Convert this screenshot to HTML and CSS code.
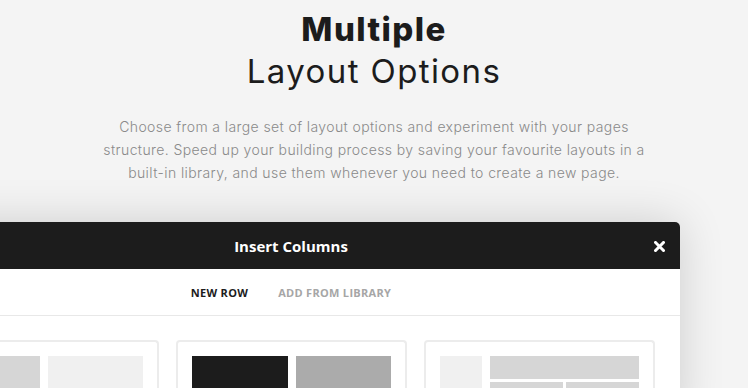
FILE: index.html
```html
<!DOCTYPE html>
<html lang="en">

<head>
  <meta charset="UTF-8" />
  <meta name="viewport" content="width=device-width, initial-scale=1.0" />
  <title>Multiple Layout Options</title>
  <link rel="stylesheet" href="styles.css">
</head>

<body>
  <section class="intro">
    <h1>
      <span class="strong">Multiple</span>
      <span class="light">Layout Options</span>
    </h1>
    <p>Choose from a large set of layout options and experiment with your pages structure. Speed up your building process by saving your favourite layouts in a built-in library, and use them whenever you need to create a new page.</p>
  </section>

  <section class="modal">
    <div class="modal-head">
      <h2>Insert Columns</h2>
      <span class="close">
        <svg width="11" height="11" viewBox="0 0 11 11">
          <path d="M1.5 1.5 L9.5 9.5 M9.5 1.5 L1.5 9.5" stroke="#fff" stroke-width="3" stroke-linecap="square" />
        </svg>
      </span>
    </div>
    <div class="tabs">
      <a class="tab active">NEW ROW</a>
      <a class="tab">ADD FROM LIBRARY</a>
    </div>
    <div class="layouts">
      <div class="layout-card">
        <div class="cols">
          <div class="block mid"></div>
          <div class="block pale"></div>
        </div>
      </div>
      <div class="layout-card">
        <div class="cols">
          <div class="block dark"></div>
          <div class="block grey"></div>
        </div>
      </div>
      <div class="layout-card">
        <div class="cols side">
          <div class="block pale tall"></div>
          <div class="stack">
            <div class="block mid wide"></div>
            <div class="pair">
              <div class="block mid"></div>
              <div class="block mid"></div>
            </div>
          </div>
        </div>
      </div>
    </div>
  </section>
</body>

</html>
```

FILE: styles.css
```css
/* Reset some default styles */
* {
    margin: 0;
    padding: 0;
    box-sizing: border-box;
}

body {
    background-color: #f4f4f4;
    font-family: "Inter", "Liberation Sans", sans-serif;
    overflow: hidden;
}

/* Intro text */
.intro {
    text-align: center;
    padding-top: 8px;
}

.intro h1 {
    font-size: 33px;
    line-height: 42px;
    letter-spacing: 1.4px;
    color: #1c1c1c;
}

.intro h1 span {
    display: block;
}

.intro .strong {
    font-weight: 800;
}

.intro .light {
    font-weight: 400;
}

.intro p {
    width: 548px;
    margin: 23px auto 0;
    font-size: 14px;
    line-height: 23px;
    letter-spacing: 0.4px;
    font-weight: 300;
    color: #8a8a8a;
}

/* Modal */
.modal {
    width: 778px;
    margin: 38px 0 0 -98px;
    background-color: #fff;
    border-radius: 5px 5px 0 0;
    box-shadow: 0 0 45px rgba(0, 0, 0, 0.16);
    font-family: "Open Sans", sans-serif;
}

.modal-head {
    position: relative;
    height: 47px;
    background-color: #1c1c1c;
    border-radius: 5px 5px 0 0;
    display: flex;
    align-items: center;
    justify-content: center;
}

.modal-head h2 {
    color: #fff;
    font-size: 15px;
    font-weight: 700;
}

.close {
    position: absolute;
    right: 15px;
    top: 19px;
    display: flex;
}

.tabs {
    height: 47px;
    border-bottom: 1px solid #e8e8e8;
    display: flex;
    justify-content: center;
    align-items: center;
    gap: 30px;
}

.tab {
    font-size: 11px;
    font-weight: 700;
    letter-spacing: 0.3px;
    color: #a6a6a6;
}

.tab.active {
    color: #1c1c1c;
}

/* Layout cards */
.layouts {
    display: grid;
    grid-template-columns: repeat(3, 231px);
    gap: 17px;
    padding: 24px 24px 0 26px;
}

.layout-card {
    height: 80px;
    border: 2px solid #ececec;
    border-bottom: none;
    border-radius: 4px 4px 0 0;
    padding: 14px 14px 0;
}

.cols {
    display: flex;
    gap: 8px;
}

.block {
    flex: 1;
    height: 60px;
}

.dark { background-color: #1c1c1c; }
.grey { background-color: #ababab; }
.mid { background-color: #d6d6d6; }
.pale { background-color: #f0f0f0; }

.side .tall {
    flex: 0 0 42px;
}

.stack {
    flex: 1;
    display: flex;
    flex-direction: column;
    gap: 3px;
}

.stack .wide {
    flex: none;
    height: 23px;
}

.pair {
    display: flex;
    gap: 3px;
}

.pair .block {
    height: 30px;
}
```
